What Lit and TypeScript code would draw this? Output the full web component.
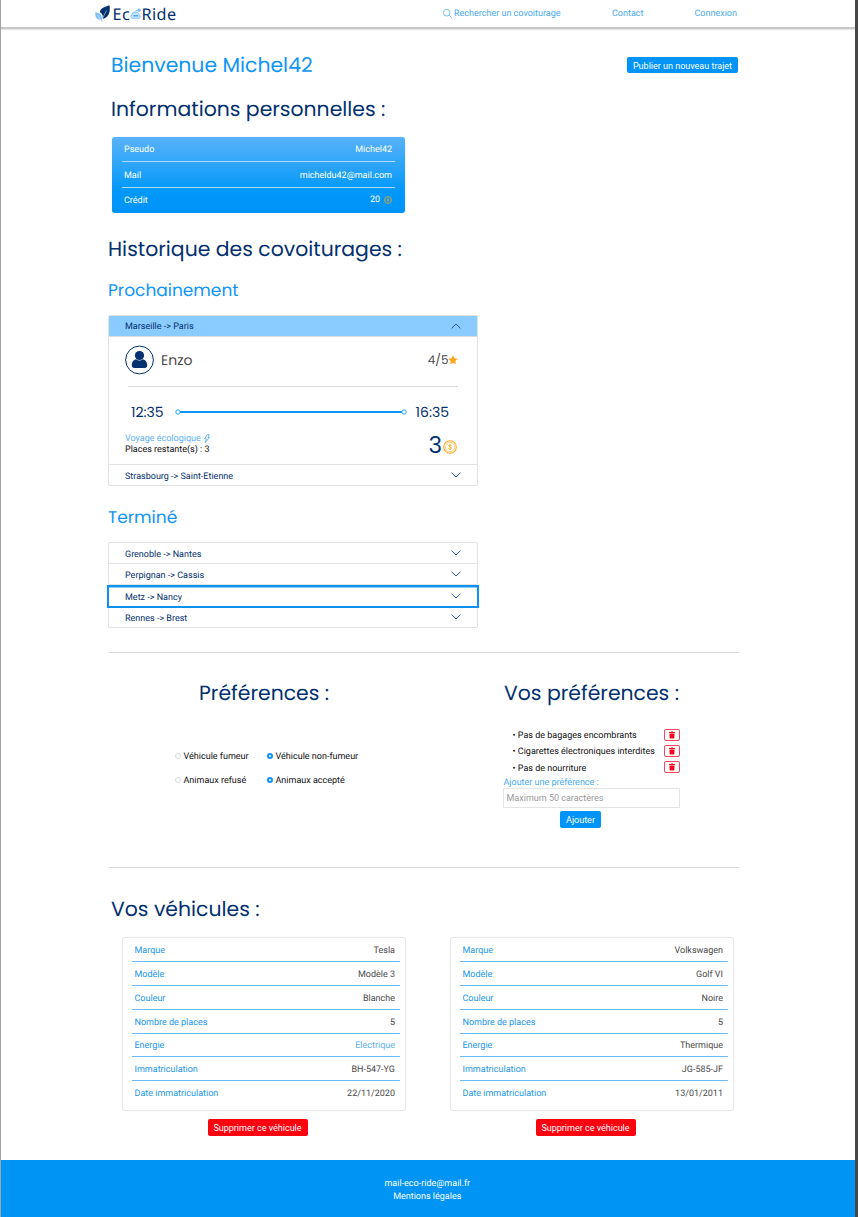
import { LitElement, html, css } from "lit";
import { customElement, property } from "lit/decorators.js";
import { classMap } from "lit/directives/class-map.js";

const coin = html`<svg class="coin" viewBox="0 0 16 16" fill="none" stroke="#ffa61a">
  <circle cx="8" cy="8" r="7.2" stroke-width="1.2" />
  <circle cx="8" cy="8" r="5.3" stroke-width="0.6" />
  <path d="M9.7 6.600C9.500 5.900 8.900 5.600 8 5.600c-1 0-1.700.4-1.700 1.100C6.300 8.300 9.800 7.500 9.800 9.200c0 .8-.8 1.200-1.800 1.200s-1.700-.4-1.900-1.100M8 4.600v6.800" stroke-width="0.9" />
</svg>`;

@customElement("eco-header")
export class EcoHeader extends LitElement {
  static styles = css`
    :host { display: block; }
    .bar { height: 27px; background: #fff; border-bottom: 2px solid #c8c8c8; box-shadow: 0 1px 1px #e6e6e6; display: flex; align-items: center; box-sizing: content-box; padding-left: 94px; }
    .logo { display: flex; align-items: center; height: 27px; width: 300px; color: #03306f; font: 16.200px/28px "Noto Sans", sans-serif; letter-spacing: 0.450px; }
    .leaf { width: 15px; height: 17px; margin-right: 2.500px; }
    .cloud { width: 11px; height: 11px; margin: 0 0.300px 0 0; }
    nav { display: flex; margin-left: 48px; padding-top: 1px; color: #47aaf4; font: 9px/28px Roboto, sans-serif; }
    .search { display: flex; align-items: center; gap: 2px; width: 169px; }
    .glass { width: 9px; height: 9px; margin-top: -1px; }
    .contact { width: 82.500px; }
  `;
  render() {
    return html`<header class="bar">
      <div class="logo">
        <svg class="leaf" viewBox="0 0 15 17">
          <path d="M14.500 0.300C11 2 5.500 2.300 4.900 7.300c2.400 1 3.500 3.600 2.500 6.600C12.300 13.300 15.900 8.500 14.500.3Z" fill="#03306f" />
          <path d="M7.200 14 11.500 5.500" stroke="#fff" stroke-width="0.5" />
          <path d="M.4 7.300c3.200.3 7.100 1.800 6.500 7.500C2.900 15.400-.3 13 .4 7.300Z" fill="#79c0fa" />
          <path d="m2.300 9.400 4.600 7" stroke="#fff" stroke-width="0.5" fill="none" />
          <path d="m6.200 14.500.8 2" stroke="#79c0fa" stroke-width="0.9" />
        </svg>
        <span>Ec</span>
        <svg class="cloud" viewBox="0 0 11 11" fill="none">
          <path d="M8 10.300H2.700A2 2 0 0 1 2 6.500a2.300 2.300 0 0 1 2.700-2A3 3 0 0 1 9 6.800a1.800 1.800 0 0 1-1 3.500Z" fill="#c9e5fd" stroke="#65b6f8" stroke-width="0.8" />
          <path d="M3.300 7.800h4.800" stroke="#3e9ff0" stroke-width="1.300" />
          <circle cx="9" cy="2.300" r="1.700" fill="#79c0fa" />
          <path d="M4.500 3.200 7 2.500" stroke="#79c0fa" stroke-width="0.9" />
        </svg>
        <span>Ride</span>
      </div>
      <nav>
        <span class="search">
          <svg class="glass" viewBox="0 0 16 16" fill="none" stroke="#47aaf4" stroke-width="1.300"><circle cx="6.600" cy="6.600" r="5.900" /><path d="m11 11 4.500 4.500" /></svg>
          Rechercher un covoiturage
        </span>
        <span class="contact">Contact</span>
        <span>Connexion</span>
      </nav>
    </header>`;
  }
}

@customElement("ride-row")
export class RideRow extends LitElement {
  @property() label = "";
  @property({ type: Boolean }) open = false;
  @property({ type: Boolean }) active = false;
  static styles = css`
    :host { display: block; }
    .row { height: 100%; box-sizing: border-box; padding: 0 16px 0 16px; display: flex; align-items: center; justify-content: space-between; font: 9px/12px Roboto, sans-serif; color: #03306f; }
    .label { padding-top: 3px; }
    .open { background: #8accff; }
    .open .label { padding-top: 1px; }
    .active { outline: 2px solid #0d92ee; box-shadow: inset 0 1px #8bcbf8; }
    .chev { width: 10px; height: 6px; margin-top: -1px; }
    .open .chev { margin-top: 0; }
  `;
  render() {
    return html`<div class=${classMap({ row: true, open: this.open, active: this.active })}>
      <span class="label">${this.label}</span>
      <svg class="chev" viewBox="0 0 10 6" fill="none" stroke="#2f5a90" stroke-width="1">
        <path d=${this.open ? "M.5 5.300 5 1l4.500 4.300" : "M.5.700 5 5 9.500.700"} />
      </svg>
    </div>`;
  }
}

@customElement("vehicle-card")
export class VehicleCard extends LitElement {
  @property({ attribute: false }) rows: string[][] = [];
  static styles = css`
    :host { display: block; width: 284px; font: 9px/12px Roboto, sans-serif; }
    .card { width: 284px; height: 174px; box-sizing: border-box; border: 1px solid #e9e9e9; border-radius: 3px; box-shadow: 0 0 1px #e4e4e4; padding: 1px 5px 0 9px; }
    .line { height: 19.750px; display: flex; justify-content: space-between; align-items: center; padding: 3px 5px 0 2.500px; border-bottom: 1px solid #6cbbfa; color: #4a4a4a; }
    .line:last-child { border: 0; }
    .key { color: #2196f0; }
    .green { color: #5cb0f5; }
    .remove { display: block; margin: 8px 0 0 85.500px; width: 100px; height: 17px; border: 0; border-radius: 2px; background: #ff0010; color: #fff; padding: 1px 0 0; font: inherit; }
  `;
  render() {
    return html`<div class="card">
        ${this.rows.map(([k, v]) => html`<div class="line"><span class="key">${k}</span><span class=${v === "Electrique" ? "green" : ""}>${v}</span></div>`)}
      </div>
      <button class="remove">Supprimer ce véhicule</button>`;
  }
}

const keys = ["Marque", "Modèle", "Couleur", "Nombre de places", "Energie", "Immatriculation", "Date immatriculation"];
const vehicles = [
  ["Tesla", "Modèle 3", "Blanche", "5", "Electrique", "BH-547-YG", "22/11/2020"],
  ["Volkswagen", "Golf VI", "Noire", "5", "Thermique", "JG-585-JF", "13/01/2011"],
].map((values) => keys.map((k, i) => [k, values[i]]));

@customElement("app-root")
export class AppRoot extends LitElement {
  static styles = css`
    :host { display: block; box-sizing: border-box; width: 858px; height: 1217px; overflow: hidden; background: #fff; border-left: 1px solid #a3a3a3; border-right: 3px solid #474747; font: 9px/12px Roboto, sans-serif; color: #111; text-rendering: geometricPrecision; }
    main { height: 1131px; padding: 0 115px 0 107px; box-sizing: border-box; display: flex; flex-direction: column; align-items: flex-start; }
    h1, h2, h3 { margin: 0; font-family: Poppins, Inter, sans-serif; font-weight: 400; white-space: nowrap; height: 30px; line-height: 30px; flex: none; }
    h1, h2 { font-size: 20.400px; line-height: 33px; }
    h1, h3 { color: #0d95f5; }
    h2 { color: #03306f; }
    h3 { font-size: 17px; }
    button { font: inherit; color: #fff; border: 0; padding: 0; border-radius: 2px; background: #0094f8; }
    .top { width: 627px; margin: 21px 0 0 3px; display: flex; justify-content: space-between; align-items: center; }
    .publish { width: 111px; height: 16px; padding-top: 1px; }
    .infos { margin: 14px 0 0 3px; }
    .account { margin: 12.500px 0 0 3.500px; width: 293.500px; height: 76.500px; box-sizing: border-box; padding: 0 10.500px; border-radius: 3px; background: linear-gradient(#5ab2f8, #0098fa 72%, #0093f7); box-shadow: 0 0 1px #7abcf0; color: #fff; }
    .field { height: 25.500px; box-sizing: border-box; display: flex; justify-content: space-between; align-items: center; padding: 3px 2.500px 0 2px; border-bottom: 1px solid #add9fc; }
    .field:last-child { border: 0; padding-top: 2px; }
    .credit { display: flex; align-items: center; gap: 4px; margin-top: -3px; }
    .credit .coin { width: 8px; height: 8px; margin-top: 1px; }
    .history { margin: 20.500px 0 0; }
    .soon { margin-top: 11.500px; }
    .rides { width: 370px; box-sizing: border-box; border: 1px solid #e2e2e2; border-radius: 2px; flex: none; }
    .next { margin-top: 10px; height: 171px; }
    .next .first { height: 20px; border-bottom: 1px solid #dcdcdc; }
    .trip { height: 128px; box-sizing: border-box; border-bottom: 1px solid #e2e2e2; padding: 8px 19px 0 16px; font-family: Poppins, Inter, sans-serif; }
    .driver { display: flex; align-items: center; height: 30px; color: #4a4a4a; font-size: 14px; }
    .avatar { width: 30px; height: 30px; margin-right: 6px; }
    .name { flex: 1; }
    .rate { font-size: 12px; padding-top: 1px; margin-right: -0.500px; }
    .star { width: 10px; height: 10px; }
    .sep { height: 1px; background: #d6d6d6; margin: 11px 0 0 3px; }
    .times { display: flex; align-items: center; height: 20px; margin: 14.500px 9px 0 6px; color: #03306f; font-size: 14px; }
    .track { flex: 1; height: 6px; margin: 0 9px 0 11px; }
    .bottom { display: flex; justify-content: space-between; height: 32px; margin-top: 8px; }
    .eco { font: 9px/11.500px Roboto, sans-serif; padding-top: 4px; color: #111; }
    .green { color: #5cb0f5; display: flex; align-items: center; gap: 3px; }
    .bolt { width: 6px; height: 9px; margin-top: -1px; }
    .price { display: flex; align-items: center; color: #03306f; font-size: 23px; gap: 1px; margin-right: 1px; padding-top: 1px; }
    .price .coin { width: 14px; height: 14px; margin-top: 2px; }
    .next .last { height: 20px; padding-top: 1px; box-sizing: border-box; }
    .done { margin-top: 16px; }
    .past { margin-top: 10px; height: 86px; }
    .past ride-row { height: 21px; box-sizing: border-box; border-bottom: 1px solid #e2e2e2; padding-top: 1px; }
    .past ride-row[active] { height: 22px; padding-top: 2px; }
    .past ride-row:last-child { border: 0; height: 20px; padding-top: 1px; }
    .rule { width: 630px; height: 1px; margin-left: 1px; background: #dcdcdc; flex: none; }
    .rule.r1 { margin-top: 24px; }
    .prefs { width: 630px; height: 214px; box-sizing: border-box; padding-top: 25px; display: flex; flex: none; }
    .choices { width: 395px; }
    .pref-title { margin-left: 91px; }
    .options { display: grid; grid-template-columns: 92px auto; row-gap: 12px; margin: 42px 0 0 67px; }
    .option { display: flex; align-items: center; gap: 2.500px; white-space: nowrap; height: 12px; }
    .text { padding-top: 1px; }
    .dot { width: 6px; height: 6px; box-sizing: border-box; border: 1px solid #dcdcdc; border-radius: 50%; }
    .on { border: 2px solid #0d95f5; }
    .custom { width: 177px; }
    .custom-title { margin-left: 1px; }
    ul { list-style: none; margin: 18.500px 0 0; padding: 0 0 0 9.500px; }
    li { height: 16.350px; display: flex; align-items: center; justify-content: space-between; }
    li .text { padding-top: 2.500px; }
    .bin { width: 16px; height: 12px; }
    .hint { color: #47aaf4; height: 12px; line-height: 14px; padding-left: 0.500px; }
    .entry { width: 177px; height: 20px; box-sizing: border-box; border: 1px solid #e4e4e4; padding: 0 2.500px; color: #111; font: inherit; display: block; }
    .entry::placeholder { color: #999; opacity: 1; }
    .add { display: block; width: 41px; height: 16.500px; margin: 3.500px 0 0 57px; padding-top: 1px; }
    .cars-title { margin: 26px 0 0 3px; }
    .cars { display: flex; gap: 44px; margin: 12.500px 0 0 14px; }
    footer { background: #0094f5; height: 57px; box-sizing: border-box; color: #fff; text-align: center; line-height: 13.500px; padding: 17.500px 1.500px 0 0; }
  `;

  option(label: string, on: boolean) {
    return html`<label class="option"><span class=${classMap({ dot: true, on })}></span><span class="text">${label}</span></label>`;
  }

  preference(label: string) {
    return html`<li><span class="text">• ${label}</span>
      <svg class="bin" viewBox="0 0 16 12">
        <rect x="0.500" y="0.500" width="15" height="11" rx="1.500" fill="#fff" stroke="#ff4554" />
        <path d="M5 3h2l.3-.6h1.500L9 3h2v1H5Zm.4 1.400h5.200L10.200 9.500H5.800Z" fill="#ff0018" />
      </svg></li>`;
  }

  render() {
    return html`
      <eco-header></eco-header>
      <main>
        <div class="top"><h1>Bienvenue Michel42</h1><button class="publish">Publier un nouveau trajet</button></div>
        <h2 class="infos">Informations personnelles :</h2>
        <section class="account">
          <div class="field"><span>Pseudo</span><span>Michel42</span></div>
          <div class="field"><span>Mail</span><span>micheldu42@mail.com</span></div>
          <div class="field"><span>Crédit</span><span class="credit">20 ${coin}</span></div>
        </section>
        <h2 class="history">Historique des covoiturages :</h2>
        <h3 class="soon">Prochainement</h3>
        <section class="rides next">
          <ride-row class="first" label="Marseille -> Paris" open></ride-row>
          <div class="trip">
            <div class="driver">
              <svg class="avatar" viewBox="0 0 30 30"><circle cx="14.500" cy="15" r="13.900" fill="#fff" stroke="#03306f" /><circle cx="14.500" cy="10.500" r="4.600" fill="#03306f" /><path d="M6.800 20.500c0-4 2-5.700 4.300-6.300 2 1.700 4.800 1.700 6.800 0 2.300.6 4.300 2.300 4.300 6.300 0 1.500-1 2.500-2.500 2.500H9.300c-1.500 0-2.500-1-2.500-2.500Z" fill="#03306f" /></svg>
              <span class="name">Enzo</span><span class="rate">4/5</span>
              <svg class="star" viewBox="0 0 10 10"><path d="m5 .3 1.400 3 3.300.4-2.400 2.300.6 3.300L5 7.700 2.100 9.300l.6-3.300L.3 3.700l3.300-.4Z" fill="#ffa61a" /></svg>
            </div>
            <div class="sep"></div>
            <div class="times">
              <span>12:35</span>
              <svg class="track" viewBox="0 0 232 6" preserveAspectRatio="none" fill="#fff" stroke="#0d95f5"><path d="M5 3h222" stroke-width="1.800" /><circle cx="3" cy="3" r="2.200" stroke-width="0.900" /><circle cx="229" cy="3" r="2.200" stroke-width="0.900" /></svg>
              <span>16:35</span>
            </div>
            <div class="bottom">
              <div class="eco">
                <div class="green">Voyage écologique <svg class="bolt" viewBox="0 0 6 9" fill="none" stroke="#47aaf4" stroke-width="0.800"><path d="M3.400.5h1.800L4 3.400h1.500L1.300 8.500l1.100-3.700H.6Z" /></svg></div>
                <div>Places restante(s) : 3</div>
              </div>
              <div class="price">3${coin}</div>
            </div>
          </div>
          <ride-row class="last" label="Strasbourg -> Saint-Etienne"></ride-row>
        </section>
        <h3 class="done">Terminé</h3>
        <section class="rides past">
          <ride-row label="Grenoble -> Nantes"></ride-row>
          <ride-row label="Perpignan -> Cassis"></ride-row>
          <ride-row label="Metz -> Nancy" active></ride-row>
          <ride-row label="Rennes -> Brest"></ride-row>
        </section>
        <div class="rule r1"></div>
        <section class="prefs">
          <div class="choices">
            <h2 class="pref-title">Préférences :</h2>
            <div class="options">
              ${this.option("Véhicule fumeur", false)}${this.option("Véhicule non-fumeur", true)}
              ${this.option("Animaux refusé", false)}${this.option("Animaux accepté", true)}
            </div>
          </div>
          <div class="custom">
            <h2 class="custom-title">Vos préférences :</h2>
            <ul>${["Pas de bagages encombrants", "Cigarettes électroniques interdites", "Pas de nourriture"].map((p) => this.preference(p))}</ul>
            <div class="hint">Ajouter une préférence :</div>
            <input class="entry" placeholder="Maximum 50 caractères" />
            <button class="add">Ajouter</button>
          </div>
        </section>
        <div class="rule"></div>
        <h2 class="cars-title">Vos véhicules :</h2>
        <section class="cars">${vehicles.map((rows) => html`<vehicle-card .rows=${rows}></vehicle-card>`)}</section>
      </main>
      <footer><div>mail-eco-ride@mail.fr</div><div>Mentions légales</div></footer>
    `;
  }
}
